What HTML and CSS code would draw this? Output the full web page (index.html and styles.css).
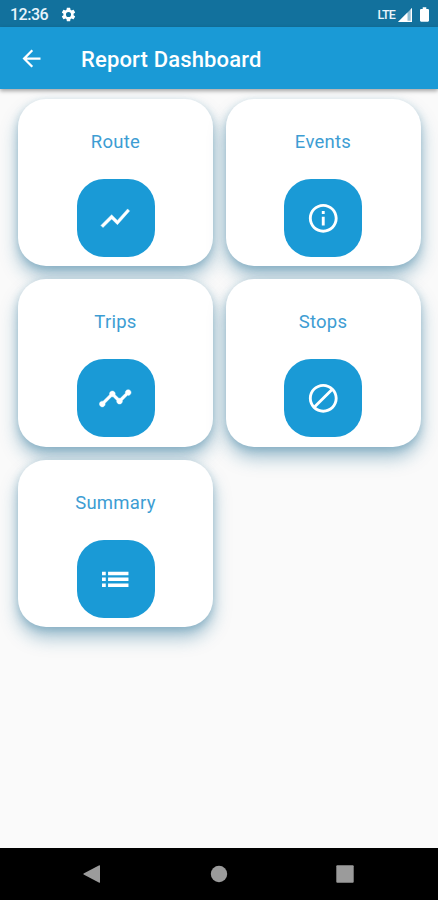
FILE: index.html
```html
<!DOCTYPE html>
<html lang="en">
<head>
    <meta charset="UTF-8">
    <meta name="viewport" content="width=device-width, initial-scale=1.0">
    <title>Report Dashboard</title>
    <link rel="stylesheet" href="styles.css">
</head>
<body>

<div class="status-bar">
    <span class="time">12:36</span>
    <svg class="gear" viewBox="0 0 24 24"><path d="M19.14 12.94c.04-.3.06-.61.06-.94 0-.32-.02-.64-.07-.94l2.03-1.58a.49.49 0 0 0 .12-.61l-1.92-3.32a.49.49 0 0 0-.59-.22l-2.39.96c-.5-.38-1.03-.7-1.62-.94l-.36-2.54a.48.48 0 0 0-.48-.41h-3.84c-.24 0-.43.17-.47.41l-.36 2.54c-.59.24-1.13.57-1.62.94l-2.39-.96a.48.48 0 0 0-.59.22L2.74 8.87c-.12.21-.08.47.12.61l2.03 1.58c-.05.3-.09.63-.09.94s.02.64.07.94l-2.03 1.58a.49.49 0 0 0-.12.61l1.92 3.32c.12.22.37.29.59.22l2.39-.96c.5.38 1.03.7 1.62.94l.36 2.54c.05.24.24.41.48.41h3.84c.24 0 .44-.17.47-.41l.36-2.54c.59-.24 1.13-.56 1.62-.94l2.39.96c.22.08.47 0 .59-.22l1.92-3.32a.48.48 0 0 0-.12-.61zM12 15.6a3.6 3.6 0 1 1 0-7.2 3.6 3.6 0 0 1 0 7.2z"/></svg>
    <span class="network">LTE</span>
    <svg class="signal" viewBox="0 0 14 14"><path d="M0 14 14 0v14z" opacity=".55"/><path d="M0 14 9.5 4.5V14zM12.7 1.3 14 0v14H9.5v-1.3h3.2z"/></svg>
    <svg class="battery" viewBox="0 0 10 16"><path d="M3 0h4v1.8h1.8Q10 1.8 10 3v11.8q0 1.2-1.2 1.2H1.2Q0 16 0 14.8V3q0-1.2 1.2-1.2H3z"/></svg>
</div>

<header class="app-bar">
    <svg class="back" viewBox="0 0 24 24"><path d="M20 11H7.83l5.59-5.59L12 4l-8 8 8 8 1.41-1.41L7.83 13H20v-2z"/></svg>
    <h1>Report Dashboard</h1>
</header>

<main class="grid">
    <div class="card">
        <h2>Route</h2>
        <div class="icon">
            <svg class="bold" viewBox="0 0 24 24"><path d="M3.5 18.49l6-6.01 4 4L22 6.92l-1.41-1.41-7.09 7.97-4-4L2 16.99z"/></svg>
        </div>
    </div>
    <div class="card">
        <h2>Events</h2>
        <div class="icon">
            <svg viewBox="0 0 24 24"><path d="M11 7h2v2h-2zm0 4h2v6h-2zm1-9C6.48 2 2 6.48 2 12s4.48 10 10 10 10-4.48 10-10S17.52 2 12 2zm0 18c-4.41 0-8-3.59-8-8s3.59-8 8-8 8 3.59 8 8-3.59 8-8 8z"/></svg>
        </div>
    </div>
    <div class="card">
        <h2>Trips</h2>
        <div class="icon">
            <svg class="bold" viewBox="0 0 24 24"><path d="M23 8c0 1.1-.9 2-2 2-.18 0-.35-.02-.51-.07l-3.56 3.55c.05.16.07.34.07.52 0 1.1-.9 2-2 2s-2-.9-2-2c0-.18.02-.36.07-.52l-2.55-2.55c-.16.05-.34.07-.52.07s-.36-.02-.52-.07l-4.55 4.56c.05.16.07.33.07.51 0 1.1-.9 2-2 2s-2-.9-2-2 .9-2 2-2c.18 0 .35.02.51.07l4.56-4.55C8.02 9.36 8 9.18 8 9c0-1.1.9-2 2-2s2 .9 2 2c0 .18-.02.36-.07.52l2.55 2.55c.16-.05.34-.07.52-.07s.36.02.52.07l3.55-3.56C19.02 8.35 19 8.18 19 8c0-1.1.9-2 2-2s2 .9 2 2z"/></svg>
        </div>
    </div>
    <div class="card">
        <h2>Stops</h2>
        <div class="icon">
            <svg viewBox="0 0 24 24"><path d="M12 2C6.48 2 2 6.48 2 12s4.48 10 10 10 10-4.48 10-10S17.52 2 12 2zM4 12c0-4.42 3.58-8 8-8 1.85 0 3.55.63 4.9 1.69L5.69 16.9C4.63 15.55 4 13.85 4 12zm8 8c-1.85 0-3.55-.63-4.9-1.69L18.31 7.1C19.37 8.45 20 10.15 20 12c0 4.42-3.58 8-8 8z"/></svg>
        </div>
    </div>
    <div class="card">
        <h2>Summary</h2>
        <div class="icon">
            <svg viewBox="0 0 24 24"><path d="M2.8 6.7h2.6v2.5H2.8zm0 4.1h2.6v2.5H2.8zm0 4.1h2.6v2.5H2.8zM7 6.7h14.2v2.5H7zm0 4.1h14.2v2.5H7zm0 4.1h14.2v2.5H7z"/></svg>
        </div>
    </div>
</main>

<nav class="nav-bar">
    <svg viewBox="0 0 18 18"><path d="M17 .7v16.6q0 .7-.7.4L.6 9.4Q0 9 .6 8.6L16.3.3Q17 0 17 .7z"/></svg>
    <svg viewBox="0 0 18 18"><circle cx="9" cy="9" r="8.2"/></svg>
    <svg viewBox="0 0 18 18"><rect x=".3" y=".3" width="17.4" height="17.4" rx="1"/></svg>
</nav>

</body>
</html>
```
FILE: styles.css
```css
* {
    box-sizing: border-box;
}

body {
    margin: 0;
    height: 900px;
    display: flex;
    flex-direction: column;
    font-family: Roboto, sans-serif;
    background-color: #fafafa;
    overflow: hidden;
}

h1,
h2 {
    margin: 0;
}

.status-bar {
    height: 27px;
    display: flex;
    align-items: center;
    padding: 2px 9px 0 10px;
    background-color: #12719d;
    color: #e8f4fb;
    fill: #ffffff;
}

.time {
    font-size: 16px;
    font-weight: 500;
    width: 39px;
    letter-spacing: -0.5px;
}

.gear {
    width: 17px;
    height: 17px;
    margin-left: 11px;
}

.network {
    margin-left: auto;
    font-size: 12.5px;
    font-weight: 500;
    letter-spacing: -0.8px;
}

.signal {
    width: 14px;
    height: 14px;
    margin-left: 3px;
}

.battery {
    width: 9px;
    height: 15px;
    margin-left: 8px;
}

.app-bar {
    height: 62px;
    display: flex;
    align-items: center;
    padding: 2px 19px 0 18px;
    background-color: #1a9ad6;
    color: #ffffff;
    fill: #ffffff;
    box-shadow: 0 2px 4px rgba(0, 0, 0, 0.35);
}

.back {
    width: 27px;
    height: 27px;
    margin-top: -1px;
}

.app-bar h1 {
    margin-left: 36px;
    font-size: 22px;
    font-weight: 500;
    letter-spacing: 0.15px;
    white-space: nowrap;
}

.grid {
    flex: 1;
    display: grid;
    grid-template-columns: 195px 195px;
    grid-auto-rows: 167.5px;
    gap: 13px 12.5px;
    padding: 9.5px 18px;
}

.card {
    display: flex;
    flex-direction: column;
    align-items: center;
    padding-top: 32px;
    background-color: #ffffff;
    border-radius: 28px;
    box-shadow: 0 11px 18px rgba(18, 100, 140, 0.36), 0 3px 8px rgba(18, 100, 140, 0.26);
}

.card h2 {
    height: 22px;
    line-height: 22px;
    font-size: 18.5px;
    font-weight: 400;
    letter-spacing: 0.25px;
    color: #3d9dd3;
}

.icon {
    width: 78px;
    height: 78px;
    margin-top: 26px;
    display: flex;
    align-items: center;
    justify-content: center;
    padding-top: 1px;
    border-radius: 27px;
    background-color: #1a9ad6;
}

.icon svg {
    width: 34.5px;
    height: 34.5px;
    fill: #ffffff;
}

.icon .bold {
    stroke: #ffffff;
    stroke-width: 0.3;
}

.nav-bar {
    height: 52px;
    display: flex;
    align-items: center;
    justify-content: space-between;
    padding: 0 84px 0 83px;
    background-color: #000000;
    fill: #9b9b9b;
}

.nav-bar svg {
    width: 18px;
    height: 18px;
}
```
